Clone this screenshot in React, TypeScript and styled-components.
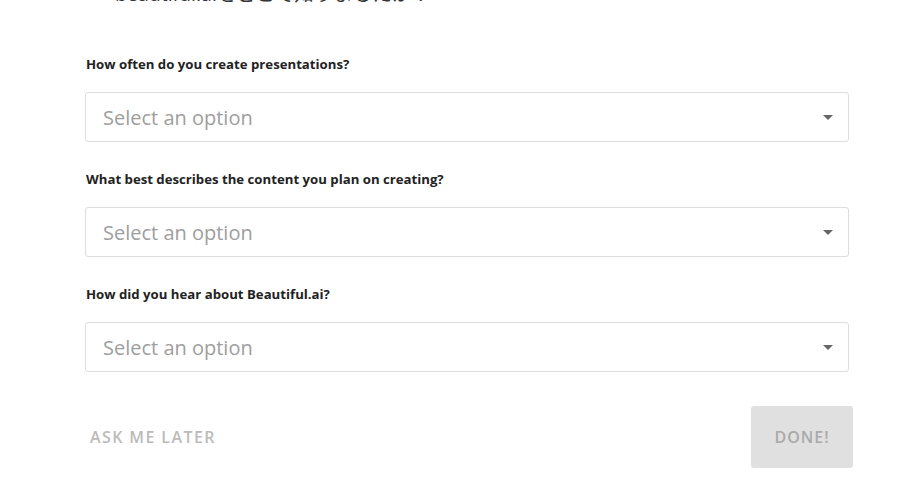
import React from 'react';
import styled, { createGlobalStyle } from 'styled-components';

const GlobalStyle = createGlobalStyle`
  html, body {
    margin: 0;
    padding: 0;
    background: #ffffff;
    overflow: hidden;
  }
  body {
    font-family: "Open Sans", Lato, "Noto Sans CJK JP", sans-serif;
  }
`;

const Page = styled.div`
  width: 900px;
  height: 500px;
  overflow: hidden;
  padding: 0 51px 0 85px;
  box-sizing: border-box;
`;

const Heading = styled.h2`
  margin: -18px 0 0 30px;
  height: 24px;
  font-size: 19.5px;
  line-height: 24px;
  font-weight: 400;
  color: #333333;
  font-family: "Open Sans", "Noto Sans CJK JP", sans-serif;
  white-space: nowrap;
`;

const Form = styled.div`
  display: flex;
  flex-direction: column;
  gap: 29px;
  margin-top: 50px;
`;

const Question = styled.div`
  display: flex;
  flex-direction: column;
  gap: 20px;
`;

const Label = styled.label`
  display: block;
  height: 16px;
  line-height: 16px;
  font-size: 13.2px;
  font-weight: 700;
  color: #222222;
  padding-left: 1px;
`;

const SelectBox = styled.div`
  height: 50px;
  box-sizing: border-box;
  border: 1px solid #dddddd;
  border-radius: 3px;
  display: flex;
  align-items: center;
  justify-content: space-between;
  padding: 0 15px 0 17px;
  background: #ffffff;
`;

const Placeholder = styled.span`
  font-size: 20px;
  color: #9e9e9e;
  font-weight: 400;
`;

const Caret = styled.span`
  width: 0;
  height: 0;
  border-left: 5px solid transparent;
  border-right: 5px solid transparent;
  border-top: 5px solid #666666;
`;

const Footer = styled.div`
  display: flex;
  align-items: center;
  justify-content: space-between;
  margin: 34px -4px 0 0;
`;

const LaterButton = styled.button`
  border: none;
  background: none;
  padding: 0 0 0 5px;
  font-family: "Open Sans", sans-serif;
  font-size: 16px;
  font-weight: 600;
  letter-spacing: 1.4px;
  color: #bbbbbb;
  text-transform: uppercase;
`;

const DoneButton = styled.button`
  width: 102px;
  height: 62px;
  border: none;
  border-radius: 3px;
  background: #e0e0e0;
  color: #aaaaaa;
  font-family: "Open Sans", sans-serif;
  font-size: 16px;
  font-weight: 600;
  letter-spacing: 1px;
  text-transform: uppercase;
`;

const questions = [
  'How often do you create presentations?',
  'What best describes the content you plan on creating?',
  'How did you hear about Beautiful.ai?',
];

const App: React.FC = () => {
  return (
    <>
      <GlobalStyle />
      <Page>
        <Heading>beautiful.aiをどこで知りましたか？</Heading>
        <Form>
          {questions.map(q => (
            <Question key={q}>
              <Label>{q}</Label>
              <SelectBox>
                <Placeholder>Select an option</Placeholder>
                <Caret />
              </SelectBox>
            </Question>
          ))}
        </Form>
        <Footer>
          <LaterButton>Ask me later</LaterButton>
          <DoneButton>Done!</DoneButton>
        </Footer>
      </Page>
    </>
  );
};

export default App;
